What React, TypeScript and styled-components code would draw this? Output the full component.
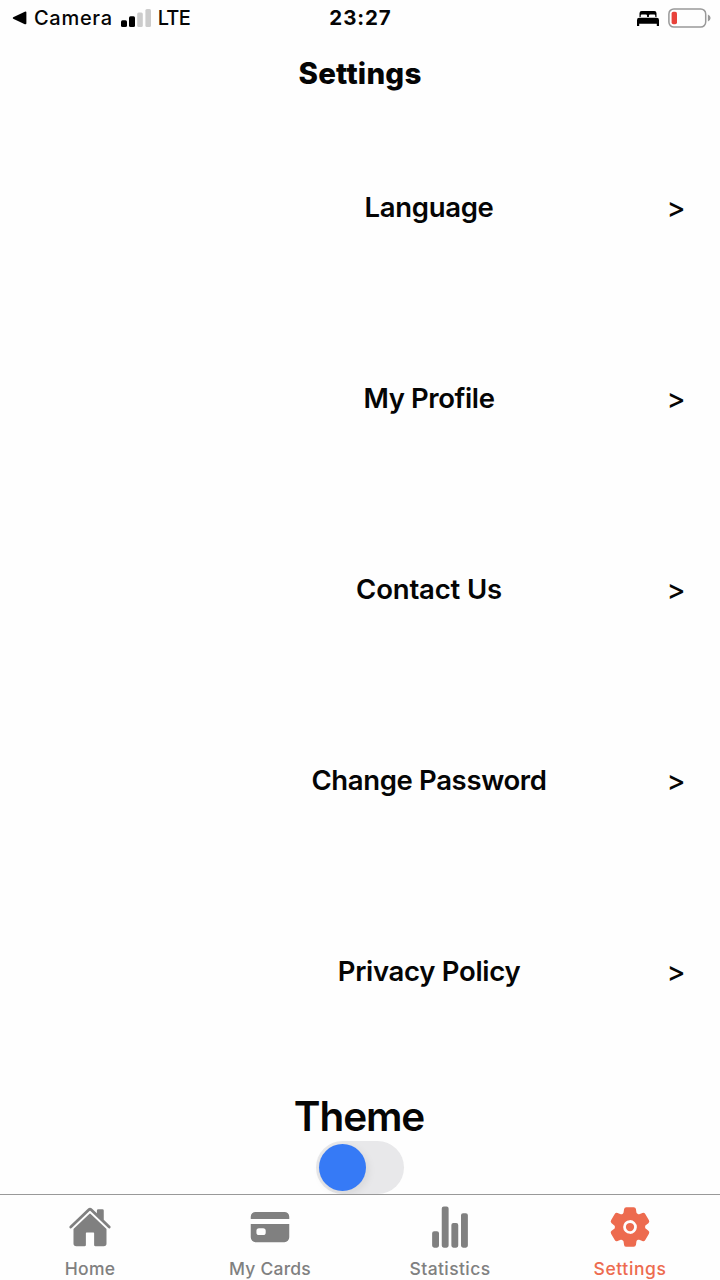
import React from "react";
import styled, { createGlobalStyle } from "styled-components";
import { IoCard, IoHome, IoSettings, IoStatsChart } from "react-icons/io5";

const GlobalStyle = createGlobalStyle`
  * { box-sizing: border-box; }
  body { margin: 0; background: #fefefe; font-family: Inter, "Liberation Sans", sans-serif; color: #050505; }
`;

const Screen = styled.div`
  width: 720px;
  height: 1280px;
  display: flex;
  flex-direction: column;
  overflow: hidden;
`;

const StatusBar = styled.header`
  height: 38px;
  flex: none;
  display: grid;
  grid-template-columns: 1fr auto 1fr;
  align-items: center;
  padding: 0 9px 2px 12px;
`;

const StatusGroup = styled.div<{ $end?: boolean }>`
  display: flex;
  align-items: center;
  justify-content: ${(p) => (p.$end ? "flex-end" : "flex-start")};
`;

const StatusText = styled.span<{ $spacing: number; $gap: number }>`
  font-size: 20px;
  line-height: 24px;
  font-weight: 500;
  letter-spacing: ${(p) => p.$spacing}px;
  margin-left: ${(p) => p.$gap}px;
`;

const Clock = styled.time`
  padding-right: 2px;
  font-size: 20.5px;
  line-height: 24px;
  font-weight: 700;
  letter-spacing: 0.9px;
`;

const Signal = styled.svg`
  margin-left: 8px;
`;

const Battery = styled.svg`
  margin-left: 9px;
`;

const Title = styled.h1`
  margin: 0;
  height: 73px;
  flex: none;
  padding-top: 17px;
  text-align: center;
  font-size: 29.5px;
  line-height: 36px;
  font-weight: 800;
  letter-spacing: 0.2px;
`;

const Menu = styled.nav`
  flex: none;
`;

const MenuRow = styled.div`
  height: 191.2px;
  display: flex;
  align-items: center;
  padding: 0 35px 0 191px;
`;

const MenuLabel = styled.span<{ $spacing: number }>`
  flex: 1;
  text-align: center;
  font-size: 27.5px;
  line-height: 34px;
  font-weight: 600;
  letter-spacing: ${(p) => p.$spacing}px;
`;

const Chevron = styled.span`
  flex: none;
  width: 18px;
  padding-top: 2px;
  display: flex;
  justify-content: center;
  font-size: 28px;
  line-height: 34px;
  font-weight: 500;
`;

const ThemeSection = styled.section`
  flex: 1;
  min-height: 0;
  padding-top: 25px;
  display: flex;
  flex-direction: column;
  align-items: center;
`;

const ThemeTitle = styled.h2`
  margin: 0;
  padding-right: 2px;
  font-size: 40.5px;
  line-height: 49px;
  font-weight: 600;
  letter-spacing: -1.1px;
`;

const Toggle = styled.div`
  flex: none;
  width: 88px;
  height: 53px;
  padding: 3px;
  border-radius: 27px;
  background: #e8e8ea;
`;

const Knob = styled.div`
  width: 47px;
  height: 47px;
  border-radius: 50%;
  background: #367af6;
  box-shadow: 2px 3px 8px rgba(0, 0, 0, 0.08);
`;

const TabBar = styled.footer`
  flex: none;
  height: 86px;
  border-top: 1.5px solid #999;
  background: #fefefe;
  display: grid;
  grid-template-columns: repeat(4, 1fr);
`;

const Tab = styled.div<{ $active?: boolean }>`
  display: flex;
  flex-direction: column;
  align-items: center;
  padding-top: 10px;
  color: ${(p) => (p.$active ? "#ed6b4f" : "#808080")};
`;

const TabLabel = styled.span<{ $spacing: number }>`
  margin-top: 9px;
  font-size: 17.5px;
  line-height: 22px;
  font-weight: 550;
  letter-spacing: ${(p) => p.$spacing}px;
`;

const items = [
  { label: "Language", spacing: -0.3 },
  { label: "My Profile", spacing: -0.4 },
  { label: "Contact Us", spacing: -0.15 },
  { label: "Change Password", spacing: -0.35 },
  { label: "Privacy Policy", spacing: -0.3 },
];

const tabs = [
  { label: "Home", Icon: IoHome, spacing: 0.3 },
  { label: "My Cards", Icon: IoCard, spacing: 0.2 },
  { label: "Statistics", Icon: IoStatsChart, spacing: 0.4 },
  { label: "Settings", Icon: IoSettings, spacing: 0.6, active: true },
];

export default function App() {
  return (
    <Screen>
      <GlobalStyle />
      <StatusBar>
        <StatusGroup>
          <svg width="15" height="14" viewBox="0 0 15 14">
            <path d="M1.2 6.2 12.8.7Q14.4.2 14.4 1.8v10.4q0 1.6-1.6 1L1.2 7.8Q.2 7 1.2 6.2Z" />
          </svg>
          <StatusText $spacing={0.7} $gap={7}>Camera</StatusText>
          <Signal width="30" height="19" viewBox="0 0 30 19">
            <rect x="0" y="11.3" width="6" height="6.7" rx="1.5" />
            <rect x="8" y="7.3" width="6" height="10.7" rx="1.5" />
            <rect x="16.2" y="3.5" width="5.6" height="14.5" rx="1.5" fill="#ccc" />
            <rect x="24.4" y="0" width="5.6" height="18" rx="1.5" fill="#ccc" />
          </Signal>
          <StatusText $spacing={-0.8} $gap={7}>LTE</StatusText>
        </StatusGroup>
        <Clock>23:27</Clock>
        <StatusGroup $end>
          <svg width="22" height="15" viewBox="0 0 22 15">
            <path d="M2.5 6V2.2Q2.5 0 4.7 0h12.6q2.2 0 2.2 2.2V6h-1.2V4.7q0-1.2-1.2-1.2h-4q-1.2 0-1.2 1.2V6h-1.8V4.7q0-1.2-1.2-1.2h-4q-1.2 0-1.2 1.2V6Z" />
            <path d="M0 15V9q0-2.2 2.2-2.2h17.6Q22 6.8 22 9v6h-2.2v-2.2H2.2V15Z" />
          </svg>
          <Battery width="43" height="20" viewBox="0 0 43 20">
            <rect x="0.9" y="0.9" width="36.8" height="18.2" rx="5" fill="none" stroke="#999" strokeWidth="1.5" />
            <rect x="3.6" y="3.8" width="5.4" height="12.4" rx="1.8" fill="#e8423a" />
            <path d="M39.9 6.5q2.7 1 2.7 3.500t-2.700 3.500Z" fill="#999" />
          </Battery>
        </StatusGroup>
      </StatusBar>
      <Title>Settings</Title>
      <Menu>
        {items.map((item) => (
          <MenuRow key={item.label}>
            <MenuLabel $spacing={item.spacing}>{item.label}</MenuLabel>
            <Chevron>&gt;</Chevron>
          </MenuRow>
        ))}
      </Menu>
      <ThemeSection>
        <ThemeTitle>Theme</ThemeTitle>
        <Toggle role="switch" aria-checked={false}>
          <Knob />
        </Toggle>
      </ThemeSection>
      <TabBar>
        {tabs.map(({ label, Icon, spacing, active }) => (
          <Tab key={label} $active={active}>
            <Icon size={44} />
            <TabLabel $spacing={spacing}>{label}</TabLabel>
          </Tab>
        ))}
      </TabBar>
    </Screen>
  );
}
